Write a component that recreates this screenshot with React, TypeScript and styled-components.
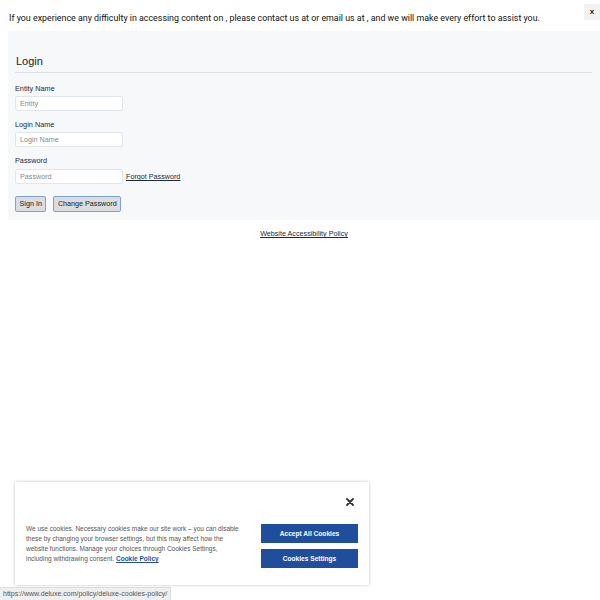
import React from "react";
import styled, { createGlobalStyle } from "styled-components";

const GlobalStyle = createGlobalStyle`
  html, body {
    margin: 0;
    padding: 0;
    background: #fff;
    font-family: "Liberation Sans", Arial, sans-serif;
  }
`;

const Page = styled.div`
  width: 600px;
  height: 600px;
  position: relative;
  overflow: hidden;
`;

// accessibility notice along the top
const Notice = styled.div`
  display: flex;
  align-items: flex-start;
  justify-content: space-between;
  padding: 4px 0 0 9px;
  height: 27px;
  box-sizing: border-box;
`;

const NoticeText = styled.p`
  margin: 9px 0 0;
  font-family: Roboto, "Liberation Sans", sans-serif;
  font-size: 8.87px;
  color: #111;
`;

const CloseNotice = styled.button`
  width: 16px;
  height: 16px;
  margin: 0;
  border: none;
  background: #f1f1f1;
  font-family: "Liberation Sans", Arial, sans-serif;
  font-size: 8px;
  font-weight: bold;
  color: #222;
  padding: 0;
  line-height: 16px;
`;

const Panel = styled.section`
  margin: 4px 0 0 8px;
  background: #f7f8fa;
  padding: 24px 8px 8px 7px;
  height: 189px;
  box-sizing: border-box;
`;

const Heading = styled.h2`
  margin: 0;
  padding: 0 0 5px 1px;
  font-size: 11px;
  font-weight: normal;
  color: #222;
  border-bottom: 1px solid #dcdfe3;
`;

const Field = styled.div<{ $top: number }>`
  display: flex;
  flex-direction: column;
  margin-top: ${(p) => p.$top}px;
`;

const Label = styled.label<{ $gap?: number }>`
  font-size: 7.3px;
  color: #1c2a3e;
  margin-bottom: ${(p) => p.$gap ?? 3}px;
  line-height: 9px;
`;

const InputRow = styled.div`
  display: flex;
  align-items: center;
  gap: 3px;
`;

const Input = styled.input`
  width: 108px;
  height: 15px;
  box-sizing: border-box;
  border: 1px solid #e2e5e9;
  border-radius: 2px;
  background: #fff;
  font-family: "Liberation Sans", Arial, sans-serif;
  font-size: 7.2px;
  padding: 0 4px;
  outline: none;
  &::placeholder {
    color: #858a90;
  }
`;

const TextLink = styled.a`
  font-size: 7.2px;
  color: #1f2a38;
  text-decoration: underline;
`;

const Actions = styled.div`
  display: flex;
  gap: 7px;
  margin-top: 12px;
`;

const FormButton = styled.button`
  height: 16px;
  padding: 0 3.5px;
  border: 1px solid #7aa3dd;
  border-radius: 2px;
  background: #dcdcde;
  font-family: "Liberation Sans", Arial, sans-serif;
  font-size: 7.2px;
  color: #1b1b1b;
  line-height: 14px;
`;

const Footer = styled.div`
  display: flex;
  justify-content: center;
  padding: 9px 0 0 8px;
`;

// cookie consent card over the page bottom
const CookieCard = styled.div`
  position: absolute;
  left: 15px;
  top: 482px;
  width: 354px;
  height: 103px;
  box-sizing: border-box;
  background: #fff;
  box-shadow: 0 0 3px rgba(0, 0, 0, 0.25);
  padding: 14px 11px 0 11px;
  display: flex;
  flex-direction: column;
`;

const CookieTop = styled.div`
  display: flex;
  justify-content: flex-end;
  height: 28px;
`;

const CookieClose = styled.button`
  border: none;
  background: none;
  padding: 0;
  width: 12px;
  height: 12px;
  margin-right: 2px;
  display: flex;
  align-items: center;
  justify-content: center;
`;

const CookieBody = styled.div`
  display: flex;
  justify-content: space-between;
  align-items: flex-start;
`;

const CookieText = styled.p`
  margin: 0;
  width: 216px;
  font-size: 6.5px;
  line-height: 10px;
  color: #555;
`;

const PolicyLink = styled.a`
  font-weight: bold;
  color: #1e4fa3;
  text-decoration: underline;
`;

const CookieButtons = styled.div`
  display: flex;
  flex-direction: column;
  gap: 6px;
`;

const CookieButton = styled.button`
  width: 97px;
  height: 19px;
  border: none;
  background: #1f4f9c;
  color: #fff;
  font-family: "Liberation Sans", Arial, sans-serif;
  font-size: 6.6px;
  font-weight: bold;
  padding: 0;
`;

const StatusBar = styled.div`
  position: absolute;
  left: 0;
  bottom: 0;
  height: 12px;
  padding: 0 3px;
  background: #eeeff1;
  border: 1px solid #dcdde0;
  border-left: none;
  border-bottom: none;
  font-family: "Liberation Sans", Arial, sans-serif;
  font-size: 7px;
  line-height: 12px;
  color: #555;
`;

const App = () => {
  return (
    <Page>
      <GlobalStyle />
      <Notice>
        <NoticeText>
          If you experience any difficulty in accessing content on , please
          contact us at or email us at , and we will make every effort to
          assist you.
        </NoticeText>
        <CloseNotice>x</CloseNotice>
      </Notice>

      <Panel>
        <Heading>Login</Heading>
        <Field $top={11}>
          <Label>Entity Name</Label>
          <Input placeholder="Entity" />
        </Field>
        <Field $top={9}>
          <Label>Login Name</Label>
          <Input placeholder="Login Name" />
        </Field>
        <Field $top={9}>
          <Label $gap={4}>Password</Label>
          <InputRow>
            <Input placeholder="Password" type="password" />
            <TextLink href="#">Forgot Password</TextLink>
          </InputRow>
        </Field>
        <Actions>
          <FormButton>Sign In</FormButton>
          <FormButton>Change Password</FormButton>
        </Actions>
      </Panel>

      <Footer>
        <TextLink href="#">Website Accessibility Policy</TextLink>
      </Footer>

      <CookieCard>
        <CookieTop>
          <CookieClose aria-label="Close">
            <svg width="8" height="8" viewBox="0 0 8 8">
              <path
                d="M1 1 L7 7 M7 1 L1 7"
                stroke="#333"
                strokeWidth="1.8"
                strokeLinecap="round"
              />
            </svg>
          </CookieClose>
        </CookieTop>
        <CookieBody>
          <CookieText>
            We use cookies. Necessary cookies make our site work – you can
            disable these by changing your browser settings, but this may
            affect how the website functions. Manage your choices through
            Cookies Settings, including withdrawing consent.{" "}
            <PolicyLink href="#">Cookie Policy</PolicyLink>
          </CookieText>
          <CookieButtons>
            <CookieButton>Accept All Cookies</CookieButton>
            <CookieButton>Cookies Settings</CookieButton>
          </CookieButtons>
        </CookieBody>
      </CookieCard>

      <StatusBar>https://www.deluxe.com/policy/deluxe-cookies-policy/</StatusBar>
    </Page>
  );
};

export default App;
